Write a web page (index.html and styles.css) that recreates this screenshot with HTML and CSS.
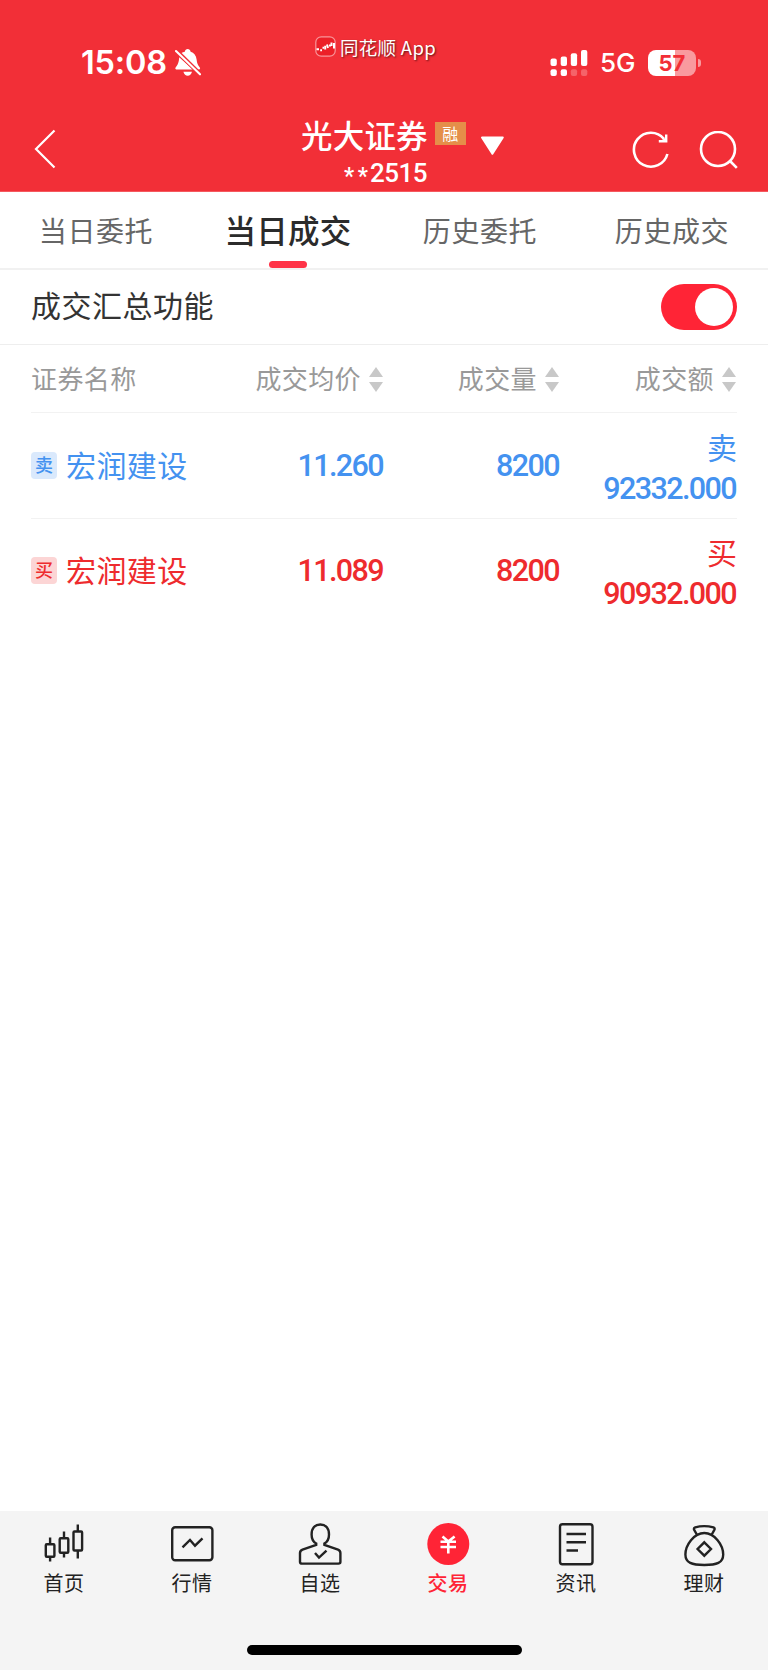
FILE: index.html
```
<!DOCTYPE html>
<html lang="zh-CN">
<head>
    <meta charset="UTF-8">
    <meta name="viewport" content="width=device-width, initial-scale=1.0">
    <title>当日成交</title>
    <link rel="stylesheet" href="styles.css">
</head>
<body>
    <header class="header">
        <div class="status-bar">
            <div class="status-left">
                <span class="time">15:08</span>
                <svg class="bell" width="26" height="28" viewBox="0 0 26 28">
                    <path fill="#fff" d="M5 4.8 L22.6 20.6 H24.2 Q25.6 20.2 24.8 18.6 C22.8 16 22 14.5 21.6 10.5 C21.2 6.5 19 3.8 15.6 2.8 C15.3 .9 14.2 0 12.7 0 C11.2 0 10.1 .9 9.8 2.8 C8.3 3.2 6.5 3.8 5 4.8 Z M4.2 8.2 L18 20.6 H1.2 Q-.2 20.2 .6 18.6 C2.8 15.6 3.9 13.4 4.2 8.2 Z M8.4 22.8 H17 Q15.8 26.8 12.7 26.8 Q9.6 26.8 8.4 22.8 Z"/>
                    <path stroke="#f22f37" stroke-width="4.4" d="M1 1.5 L25 25"/>
                    <path stroke="#fff" stroke-width="2.1" stroke-linecap="round" d="M1 2 L25 25.3"/>
                </svg>
            </div>
            <div class="watermark">
                <svg width="21" height="21" viewBox="0 0 21 21">
                    <rect x=".8" y=".8" width="19.4" height="19.4" rx="5.5" fill="#ec2028" stroke="#f8979b" stroke-width="1.2"/>
                    <path stroke="#fff" stroke-width="2" fill="none" d="M1.5 13.2 H4 M5.2 14.2 H7 M7.5 11.8 H9 M10.2 9.8 V13.5 M12 8.5 L13 12 M14 9.5 H16 M16.5 6.5 V10 M19 7 V12.5"/>
                </svg>
                <span>同花顺 App</span>
            </div>
            <div class="status-right">
                <svg width="38" height="27" viewBox="0 0 38 27">
                    <g fill="#fff">
                        <rect x=".5" y="8.5" width="6.3" height="7.5" rx="2"/>
                        <rect x="10.7" y="6.5" width="6.3" height="9.5" rx="2"/>
                        <rect x="20.8" y="3.3" width="6.3" height="12.7" rx="2"/>
                        <rect x="31" y="0" width="6.3" height="16" rx="2"/>
                        <rect x=".5" y="19.3" width="6.3" height="6.7" rx="2"/>
                        <rect x="10.7" y="19.3" width="6.3" height="6.7" rx="2"/>
                        <rect x="20.8" y="19.3" width="6.3" height="6.7" rx="2" opacity=".25"/>
                        <rect x="31" y="19.3" width="6.3" height="6.7" rx="2" opacity=".25"/>
                    </g>
                </svg>
                <span class="network">5G</span>
                <div class="battery"><span>57</span></div>
                <div class="battery-cap"></div>
            </div>
        </div>

        <div class="nav">
            <svg class="back" width="22" height="40" viewBox="0 0 22 40">
                <path d="M20.5 1.5 L2 20 L20.5 38.5" fill="none" stroke="#fff" stroke-width="2.2"/>
            </svg>
            <div class="account">
                <div class="account-text">
                    <div class="broker">光大证券<span class="margin-tag">融</span></div>
                    <div class="account-no"><span class="mask">**</span>2515</div>
                </div>
                <svg class="dropdown" width="25" height="20" viewBox="0 0 25 20">
                    <path d="M2 1.5 H22.8 L12.4 17.8 Z" fill="#fff" stroke="#fff" stroke-width="2" stroke-linejoin="round"/>
                </svg>
            </div>
            <div class="nav-actions">
                <svg width="38" height="38" viewBox="0 0 38 38" fill="none" stroke="#fff" stroke-width="2.6">
                    <path d="M35.4 23 A17 17 0 1 1 32 7.8"/>
                    <path d="M26.8 11.6 L35.4 11.6 L35.4 3.4 L33 3.4 L33 7 L30 9 L26.8 9 Z" fill="#fff" stroke="none"/>
                </svg>
                <svg width="40" height="38" viewBox="0 0 40 38" fill="none" stroke="#fff" stroke-width="2.6">
                    <circle cx="19" cy="18" r="17"/>
                    <path d="M31 30 L37.8 36.8"/>
                </svg>
            </div>
        </div>
    </header>

    <nav class="tabs">
        <div class="tab">当日委托</div>
        <div class="tab active">当日成交</div>
        <div class="tab">历史委托</div>
        <div class="tab">历史成交</div>
    </nav>

    <section class="summary">
        <span class="summary-label">成交汇总功能</span>
        <div class="switch"><div class="knob"></div></div>
    </section>

    <main class="table">
        <div class="row head">
            <div>证券名称</div>
            <div class="sortable">成交均价<span class="sort"></span></div>
            <div class="sortable">成交量<span class="sort"></span></div>
            <div class="sortable">成交额<span class="sort"></span></div>
        </div>
        <div class="row sell">
            <div class="name"><span class="tag">卖</span><span class="stock">宏润建设</span></div>
            <div class="num">11.260</div>
            <div class="num">8200</div>
            <div class="amount"><span>卖</span><span class="num">92332.000</span></div>
        </div>
        <div class="row buy">
            <div class="name"><span class="tag">买</span><span class="stock">宏润建设</span></div>
            <div class="num">11.089</div>
            <div class="num">8200</div>
            <div class="amount"><span>买</span><span class="num">90932.000</span></div>
        </div>
    </main>

    <footer class="footer">
        <div class="menu">
            <div class="menu-item">
                <svg width="44" height="44" viewBox="0 0 44 44">
                    <rect x="3.8" y="21.2" width="8.6" height="12.6" rx="1"/>
                    <rect x="17.7" y="15.2" width="8.6" height="14.6" rx="1"/>
                    <rect x="31.5" y="8.5" width="8.6" height="19" rx="1"/>
                    <path d="M8.1 14.5 V21 M8.1 34 V38.5 M22 8.5 V15 M22 30 V34.5 M35.8 1.5 V8.5 M35.8 27.5 V35.5"/>
                </svg>
                <span>首页</span>
            </div>
            <div class="menu-item">
                <svg width="44" height="44" viewBox="0 0 44 44">
                    <rect x="2.2" y="4.3" width="40.2" height="33" rx="3"/>
                    <path d="M12.5 24.3 L20 17 L25 22.7 L32.5 15.3"/>
                </svg>
                <span>行情</span>
            </div>
            <div class="menu-item">
                <svg width="44" height="44" viewBox="0 0 44 44">
                    <path d="M18.2 22 V20.5 C15 18.8 13.6 15.5 13.6 11.5 C13.6 5 17 1.5 22.3 1.5 C27.6 1.5 31 5 31 11.5 C31 15.5 29.6 18.8 26.4 20.5 V22 L40 26.6 Q42.4 27.6 42.4 30 V39 Q42.4 40.6 40.4 40.6 H4 Q2 40.6 2 39 V30 Q2 27.6 4.5 26.6 Z"/>
                    <path d="M17 30 L21 34.6 L28.5 27.6"/>
                </svg>
                <span>自选</span>
            </div>
            <div class="menu-item current">
                <svg width="44" height="44" viewBox="0 0 44 44">
                    <circle cx="22.3" cy="21" r="21" fill="#ff2436" stroke="none"/>
                    <path stroke="#fff" stroke-width="2.6" d="M16.5 13.5 L22.3 18.5 L28.6 13.5 M14.5 18.8 H30 M14.5 24 H30 M22.3 18.5 V30.5"/>
                </svg>
                <span>交易</span>
            </div>
            <div class="menu-item">
                <svg width="44" height="44" viewBox="0 0 44 44">
                    <rect x="6" y="1.2" width="32.5" height="40" rx="2.5"/>
                    <path d="M12.5 11 H32 M12.5 19.3 H32 M12.5 27.5 H24"/>
                </svg>
                <span>资讯</span>
            </div>
            <div class="menu-item">
                <svg width="44" height="44" viewBox="0 0 44 44">
                    <path d="M14.8 11.5 L12 6.5 Q11.6 5 13.2 4.4 Q22 1.8 31.5 4.4 Q33 5 32.5 6.5 L29.8 11.5"/>
                    <path d="M22.3 10 C12 10 3.4 22 3.4 31.5 C3.4 40 10 42 22.3 42 C34.6 42 41.2 40 41.2 31.5 C41.2 22 32.6 10 22.3 10 Z"/>
                    <path d="M22.3 19.3 L29 26 L22.3 32.7 L15.6 26 Z"/>
                </svg>
                <span>理财</span>
            </div>
        </div>
        <div class="home-indicator"></div>
    </footer>
</body>
</html>
```

FILE: styles.css
```
* {
    box-sizing: border-box;
}
body {
    margin: 0;
    height: 1670px;
    display: flex;
    flex-direction: column;
    background: #fff;
    color: #333;
    font-family: "Noto Sans CJK SC", sans-serif;
}
svg {
    display: block;
    flex: none;
}

/* header */
.header {
    height: 192px;
    background: #f22f37;
    color: #fff;
    border-bottom: 1px solid #f5595f;
}
.status-bar {
    height: 112px;
    display: grid;
    grid-template-columns: 315px 1fr 218px;
    align-items: start;
}
.status-left {
    display: flex;
    padding: 49px 0 0 81px;
    gap: 8px;
}
.time {
    width: 86px;
    font: 600 32.5px/28px Inter, sans-serif;
    letter-spacing: -0.2px;
    white-space: nowrap;
}
.watermark {
    display: flex;
    padding-top: 36px;
    gap: 4px;
    font-size: 18.5px;
    letter-spacing: 0.3px;
    line-height: 23px;
    text-shadow: 1px 1px 2px rgba(0, 0, 0, 0.6);
}
.status-right {
    display: flex;
    align-items: center;
    padding-top: 49px;
}
.network {
    width: 60px;
    padding-left: 12px;
    font: 500 26px/28px Inter, sans-serif;
}
.battery {
    width: 48px;
    height: 26px;
    border-radius: 8px;
    background: linear-gradient(90deg, #fff 57%, #f99a9e 57%);
    color: #f22f37;
    font: 700 22px/26px Inter, sans-serif;
    text-align: center;
}
.battery-cap {
    width: 3px;
    height: 8px;
    margin-left: 2px;
    border-radius: 0 3px 3px 0;
    background: #f99a9e;
}
.nav {
    display: grid;
    grid-template-columns: 301px 1fr 136px;
    align-items: start;
}
.back {
    margin: 17px 0 0 34px;
}
.account {
    display: flex;
}
.account-text {
    width: 167px;
}
.broker {
    display: flex;
    align-items: center;
    height: 46px;
    font-size: 31.5px;
    font-weight: 500;
    letter-spacing: 0.2px;
    line-height: 44px;
    padding-bottom: 3px;
}
.margin-tag {
    width: 31px;
    height: 23px;
    margin-left: 7px;
    background: #e58e49;
    font-size: 16px;
    font-weight: 400;
    line-height: 22px;
    text-align: center;
}
.account-no {
    display: flex;
    height: 30px;
    padding-left: 43px;
    font: 500 26px/31px Roboto, sans-serif;
    letter-spacing: -0.5px;
    white-space: nowrap;
}
.mask {
    width: 26px;
    padding-top: 3px;
    font-size: 23px;
    letter-spacing: 3.6px;
}
.dropdown {
    margin: 24px 0 0 12px;
}
.nav-actions {
    display: flex;
    gap: 29px;
    padding-top: 19px;
}

/* tabs */
.tabs {
    display: flex;
    height: 78px;
    border-bottom: 2px solid #f1f1f1;
}
.tab {
    flex: 1;
    display: flex;
    flex-direction: column;
    align-items: center;
    color: #666;
    font-size: 28px;
    letter-spacing: 0.6px;
    line-height: 76px;
}
.tab.active {
    color: #2b2b2b;
    font-size: 31.5px;
    font-weight: 500;
    letter-spacing: 0.2px;
    line-height: 75px;
}
.tab.active::after {
    content: "";
    width: 38px;
    height: 8px;
    margin-top: -6px;
    border-radius: 4px;
    background: #ff3347;
}

/* summary switch */
.summary {
    display: flex;
    align-items: center;
    justify-content: space-between;
    height: 75px;
    padding: 0 31px;
    border-bottom: 1px solid #eee;
    font-size: 30px;
    letter-spacing: 0.5px;
}
.summary-label {
    padding-bottom: 6px;
}
.switch {
    width: 76px;
    height: 46px;
    margin-bottom: 1px;
    padding: 4px;
    border-radius: 23px;
    background: #ff2436;
}
.knob {
    width: 38px;
    height: 38px;
    margin-left: 30px;
    border-radius: 50%;
    background: #fff;
}

/* deals table */
.table {
    flex: 1;
    padding: 0 31px;
}
.row {
    display: grid;
    grid-template-columns: 160px 193px 176px 1fr;
    align-items: center;
    height: 103px;
    font-size: 30px;
    text-align: right;
}
.row.sell {
    height: 106px;
    border-bottom: 1px solid #f2f2f2;
    color: #4492f0;
}
.row.buy {
    color: #ee2b2e;
}
.row.head {
    height: 68px;
    border-bottom: 1px solid #f2f2f2;
    color: #999;
    font-size: 26px;
    letter-spacing: 0.4px;
    line-height: 36px;
    padding-bottom: 1px;
    text-align: left;
}
.sortable {
    display: flex;
    align-items: center;
    justify-content: flex-end;
    gap: 8px;
}
.sort {
    display: flex;
    flex-direction: column;
    gap: 5px;
    margin: 2px 1px 0 0;
}
.sort::before,
.sort::after {
    content: "";
    border: 7px solid transparent;
}
.sort::before {
    border-top: 0;
    border-bottom: 10px solid #c8c8c8;
}
.sort::after {
    border-bottom: 0;
    border-top: 10px solid #c8c8c8;
}
.name {
    display: flex;
    align-items: center;
    white-space: nowrap;
}
.stock {
    padding-bottom: 3px;
    letter-spacing: 0.4px;
}
.tag {
    width: 26px;
    height: 27px;
    margin-right: 9px;
    border-radius: 4px;
    background: #dae9fc;
    font-size: 18px;
    font-weight: 500;
    line-height: 25px;
    text-align: center;
}
.buy .tag {
    background: #fcd5d5;
}
.num {
    padding-right: 1px;
    font: 500 30.5px/39px Roboto, sans-serif;
    letter-spacing: -1.6px;
}
.amount {
    display: flex;
    flex-direction: column;
    line-height: 39px;
}
.amount .num {
    padding-top: 3px;
    margin-bottom: -3px;
}

/* bottom menu */
.footer {
    height: 159px;
    background: #f4f4f4;
}
.menu {
    display: flex;
    padding-top: 12px;
}
.menu-item {
    flex: 1;
    display: flex;
    flex-direction: column;
    align-items: center;
    color: #222;
    font-size: 20px;
    letter-spacing: 0.5px;
    line-height: 32px;
}
.menu-item svg {
    fill: none;
    stroke: #222;
    stroke-width: 2.4;
}
.menu-item.current {
    color: #ff2436;
    font-weight: 500;
}
.home-indicator {
    width: 275px;
    height: 10px;
    margin: 46px auto 0;
    border-radius: 5px;
    background: #000;
}
```
